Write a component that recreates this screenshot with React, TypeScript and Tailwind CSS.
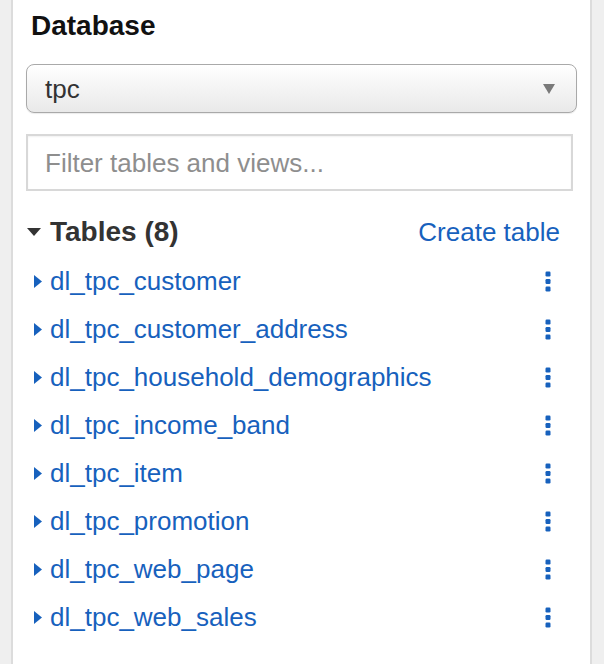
const tables = [
  "dl_tpc_customer",
  "dl_tpc_customer_address",
  "dl_tpc_household_demographics",
  "dl_tpc_income_band",
  "dl_tpc_item",
  "dl_tpc_promotion",
  "dl_tpc_web_page",
  "dl_tpc_web_sales",
];

function Kebab() {
  return (
    <svg width="6" height="21" viewBox="0 0 6 21" className="text-[#1761bd]">
      <rect x="0.5" y="0.5" width="5" height="5" rx="1.2" fill="currentColor" />
      <rect x="0.5" y="8" width="5" height="5" rx="1.2" fill="currentColor" />
      <rect x="0.5" y="15.5" width="5" height="5" rx="1.2" fill="currentColor" />
    </svg>
  );
}

function TableRow({ name }: { name: string }) {
  return (
    <div className="flex h-[48px] items-center">
      <svg width="8" height="13" viewBox="0 0 8 13" className="ml-[8px] text-[#1761bd]">
        <path d="M0 0 L8 6.5 L0 13 Z" fill="currentColor" />
      </svg>
      <span className="ml-[8px] text-[26px] leading-[32px] text-[#1761bd]">{name}</span>
      <div className="ml-auto mr-[26px] flex items-center">
        <Kebab />
      </div>
    </div>
  );
}

export default function App() {
  return (
    <div
      className="flex h-[664px] w-[604px] bg-[#efefef]"
      style={{ fontFamily: '"Liberation Sans", Arial, sans-serif' }}
    >
      <div className="ml-[11px] w-[581px] border-x-2 border-[#dcdcdc] bg-white px-[13px] pt-[10px]">
        <h2 className="pl-[5px] text-[28px] font-bold leading-[32px] text-[#111]">Database</h2>

        <div className="mt-[22px] flex h-[49px] items-center rounded-[8px] border-[1.5px] border-[#a9a9a9] bg-gradient-to-b from-white to-[#e9e9e9] pl-[18px] pr-[21px] shadow-[0_1px_1px_rgba(0,0,0,0.08)]">
          <span className="text-[26px] leading-[32px] text-[#333]">tpc</span>
          <svg width="12" height="10" viewBox="0 0 12 10" className="ml-auto">
            <path d="M0 0 L12 0 L6 10 Z" fill="#7a7a7a" />
          </svg>
        </div>

        <div className="mt-[21px] flex h-[57px] w-[547px] items-center border-2 border-[#d8d8d8] bg-white pl-[17px] shadow-[inset_0_1px_2px_rgba(0,0,0,0.06)]">
          <span className="text-[26px] leading-[32px] text-[#8e8e8e]">Filter tables and views...</span>
        </div>

        <div className="mt-[25px] flex h-[32px] items-center">
          <svg width="14" height="8" viewBox="0 0 14 8" className="ml-[1px]">
            <path d="M0 0 L14 0 L7 8 Z" fill="#333" />
          </svg>
          <span className="ml-[9px] text-[28px] font-bold leading-[32px] text-[#333]">Tables (8)</span>
          <span className="ml-auto mr-[17px] text-[26px] leading-[32px] text-[#1761bd]">Create table</span>
        </div>

        <div className="mt-[9px] flex flex-col">
          {tables.map((t) => (
            <TableRow key={t} name={t} />
          ))}
        </div>
      </div>
    </div>
  );
}
